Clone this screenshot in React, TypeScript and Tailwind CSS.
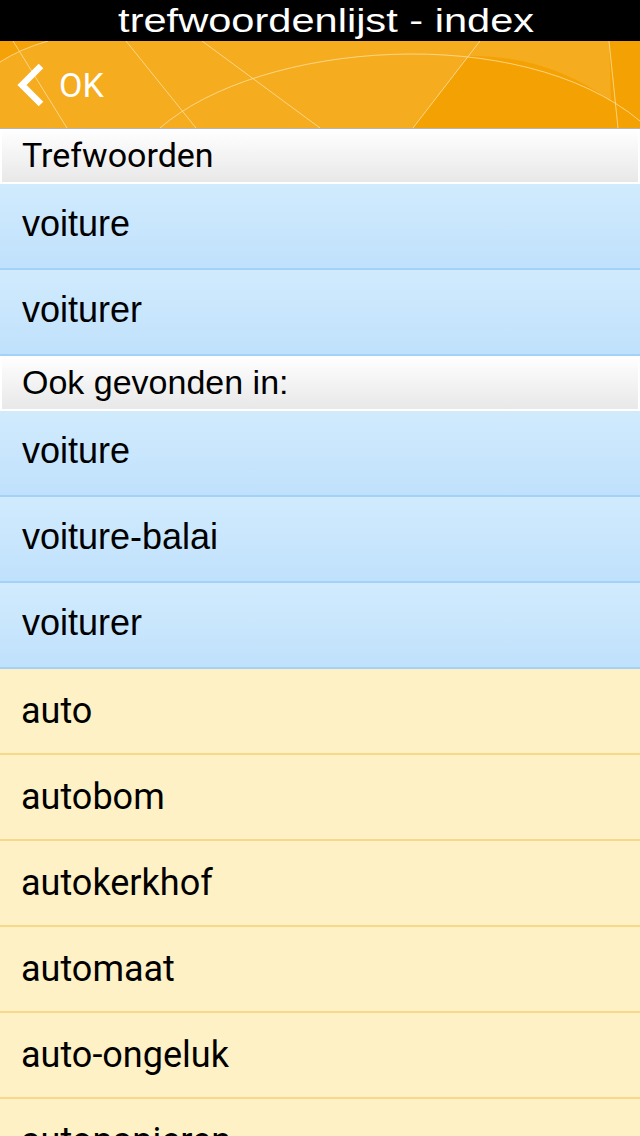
import React from "react";

const blue1 = ["voiture", "voiturer"];
const blue2 = ["voiture", "voiture-balai", "voiturer"];
const yellow = ["auto", "autobom", "autokerkhof", "automaat", "auto-ongeluk", "autopapieren"];

function SectionHeader({ label, font }: { label: string; font: string }) {
  return (
    <div className="h-[55px] shrink-0 bg-white px-[2px] pb-[2px]">
      <div
        className="flex h-full items-center bg-gradient-to-b from-white to-[#e8e8e8] pl-[20px] text-[34px] leading-none text-black"
        style={{ fontFamily: font }}
      >
        <span className="-mt-[2px]">{label}</span>
      </div>
    </div>
  );
}

function BlueRow({ label }: { label: string }) {
  return (
    <div
      className="flex h-[86px] shrink-0 items-center border-b-2 border-[#a3d2f8] bg-gradient-to-b from-[#d1ebfd] to-[#c0e1fc] pl-[22px] text-[36px] leading-none text-black"
      style={{ fontFamily: '"Liberation Sans", Arial, sans-serif' }}
    >
      <span className="-mt-[4px]">{label}</span>
    </div>
  );
}

function YellowRow({ label }: { label: string }) {
  return (
    <div
      className="flex h-[86px] shrink-0 items-center border-b-2 border-[#f8d98a] bg-[#fef1c5] pl-[21px] text-[36px] leading-none text-black"
      style={{ fontFamily: 'Roboto, "Liberation Sans", sans-serif' }}
    >
      <span className="-mt-[1px]">{label}</span>
    </div>
  );
}

export default function App() {
  return (
    <div className="flex h-[1136px] w-[640px] flex-col overflow-hidden bg-white">
      <div className="flex h-[41px] shrink-0 items-center justify-center bg-black text-white">
        <span
          className="ml-[12px] inline-block scale-x-[1.26] text-[33px] leading-none"
          style={{ fontFamily: '"Liberation Sans", Arial, sans-serif' }}
        >
          trefwoordenlijst - index
        </span>
      </div>
      <div className="relative h-[88px] shrink-0 border-b border-[#b4b4b4] bg-[#f6ac1f]">
        <svg className="absolute inset-0" width="640" height="87" viewBox="0 0 640 87">
          <path d="M0,0 L48,0 Q20,8 0,21 Z" fill="#f4a208" />
          <path d="M413,87 L469,15 C520,14 570,30 611,60 L609,0 L640,0 L640,87 Z" fill="#f4a104" />
          <g fill="none" stroke="#fde3a8" strokeOpacity="0.75" strokeWidth="1">
            <path d="M160,87 C260,0 520,-20 640,80" />
            <path d="M0,21 Q20,8 48,0" />
            <path d="M480,0 L413,87" />
            <path d="M609,0 L618,87" />
            <path d="M13,0 L67,87" />
            <path d="M126,0 L196,87" />
            <path d="M202,0 L320,87" />
          </g>
        </svg>
        <div className="relative flex h-full items-center">
          <svg className="ml-[15px]" width="30" height="44" viewBox="0 0 30 44">
            <path d="M26,3 L7,22 L26,41" fill="none" stroke="white" strokeWidth="6.5" strokeLinejoin="miter" />
          </svg>
          <span
            className="ml-[14px] text-[34px] leading-none text-white"
            style={{ fontFamily: 'Roboto, "Liberation Sans", sans-serif' }}
          >
            OK
          </span>
        </div>
      </div>
      <SectionHeader label="Trefwoorden" font='Roboto, "Liberation Sans", sans-serif' />
      {blue1.map((w, i) => (
        <BlueRow key={"a" + i} label={w} />
      ))}
      <SectionHeader label="Ook gevonden in:" font='"Liberation Sans", Arial, sans-serif' />
      {blue2.map((w, i) => (
        <BlueRow key={"b" + i} label={w} />
      ))}
      {yellow.map((w, i) => (
        <YellowRow key={"c" + i} label={w} />
      ))}
    </div>
  );
}
